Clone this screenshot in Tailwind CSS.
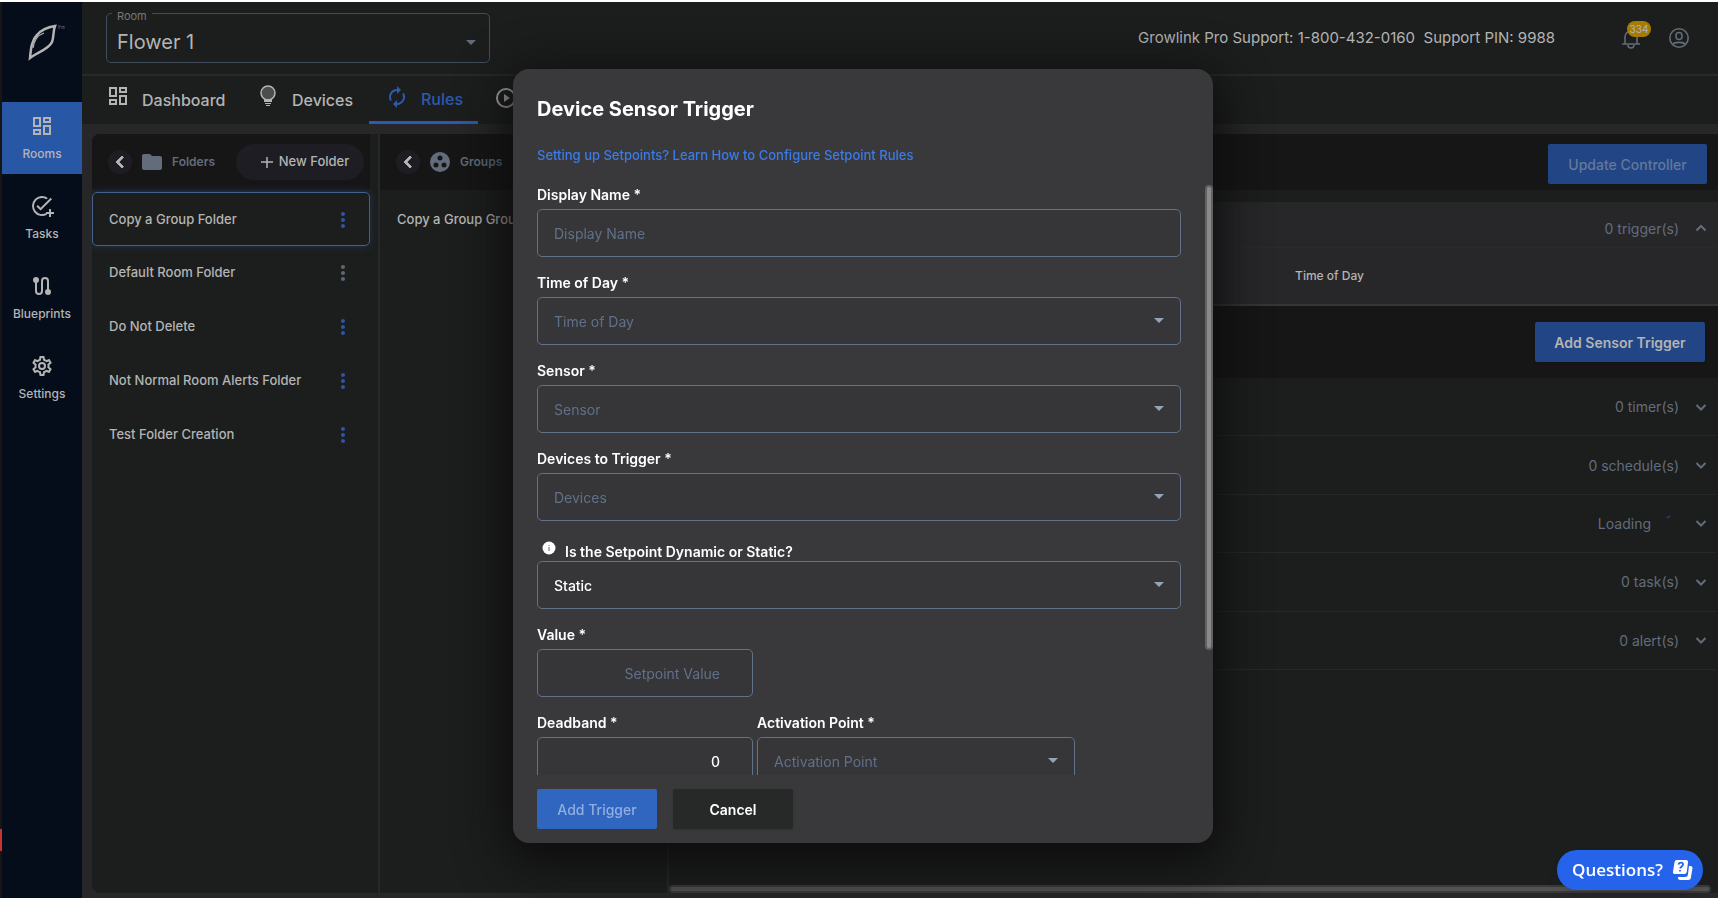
<!DOCTYPE html>
<html lang="en">
<head>
    <meta charset="UTF-8">
    <meta name="viewport" content="width=device-width, initial-scale=1.0">
    <title>Growlink - Rules</title>
    <script src="https://cdn.jsdelivr.net/npm/@tailwindcss/browser@4"></script>
</head>
<body class="h-screen overflow-hidden flex flex-col border-t-2 border-white bg-[#27272a] font-['Inter',sans-serif] text-[#b4b4b4]">
    <!-- Shared icons -->
    <svg class="hidden" xmlns="http://www.w3.org/2000/svg">
        <symbol id="i-dashboard" viewBox="0 0 24 24"><path d="M19 5v2h-4V5h4M9 5v6H5V5h4m10 8v6h-4v-6h4M9 17v2H5v-2h4M21 3h-8v6h8V3zM11 3H3v10h8V3zm10 8h-8v10h8V11zm-10 4H3v6h8v-6z"/></symbol>
        <symbol id="i-dots" viewBox="0 0 24 24"><path d="M12 8c1.100 0 2-.9 2-2s-.9-2-2-2-2 .9-2 2 .9 2 2 2zm0 2c-1.100 0-2 .9-2 2s.9 2 2 2 2-.9 2-2-.9-2-2-2zm0 6c-1.100 0-2 .9-2 2s.9 2 2 2 2-.9 2-2-.9-2-2-2z"/></symbol>
        <symbol id="i-left" viewBox="0 0 24 24"><path d="M15.400 7.400 14 6l-6 6 6 6 1.400-1.400L10.800 12z"/></symbol>
        <symbol id="i-down" viewBox="0 0 20 20"><path d="m5.500 8 4.500 4.500L14.500 8" fill="none" stroke="currentColor" stroke-width="2"/></symbol>
        <symbol id="i-up" viewBox="0 0 20 20"><path d="m5.500 11.500L10 7l4.500 4.500" fill="none" stroke="currentColor" stroke-width="2"/></symbol>
        <symbol id="i-caret" viewBox="0 0 10 5"><path d="M0 0h10L5 5z"/></symbol>
    </svg>

    <div class="flex-1 min-h-0 flex">
        <!-- Window edge -->
        <div class="w-[2px] bg-[#161616] flex flex-col justify-end pb-[47px]">
            <div class="h-[22px] bg-[#c83232]"></div>
        </div>

        <!-- Sidebar -->
        <nav class="w-20 flex-shrink-0 bg-[#060d1a] text-[12px] leading-4 font-medium flex flex-col gap-2">
            <a href="#" title="Growlink" class="h-[92px] pt-5 pl-[26px] text-[#b4b4b4]">
                <svg class="w-10 h-10" viewBox="0 0 40 40" fill="none" stroke="currentColor">
                    <path stroke-width="2.500" d="M2 36C3 25 4 18 9 13 14 7 20 5 27 4 25 9 26 15 24 20 21 27 10 30 2 36Z"/>
                    <path stroke-width="1.300" d="M5 26C6 19 10 13 16 11"/>
                    <path stroke-width="1" stroke="#4b5058" d="M30 4h3M31 4v3M34 7V4l1 1 1-1v3"/>
                </svg>
            </a>
            <a href="#" class="h-[72px] flex flex-col items-center gap-2 pt-3 bg-[#2857a6]">
                <svg class="w-6 h-6" fill="currentColor"><use href="#i-dashboard"/></svg>
                Rooms
            </a>
            <a href="#" class="h-[72px] flex flex-col items-center gap-2 pt-3">
                <svg class="w-6 h-6" viewBox="0 0 24 24" fill="currentColor"><path d="M22 5.200 10.600 16.600l-4.200-4.200 1.400-1.400 2.800 2.800L20.600 3.800 22 5.200zM12 20a8 8 0 1 1 4.400-14.700l1.500-1.400A10 10 0 1 0 17 20.700l-1-1.700c-1.200.6-2.600 1-4 1zm9-5h-2v3h-3v2h3v3h2v-3h3v-2h-3v-3z"/></svg>
                Tasks
            </a>
            <a href="#" class="h-[72px] flex flex-col items-center gap-2 pt-3">
                <svg class="w-6 h-6" viewBox="0 0 24 24" fill="none" stroke="currentColor" stroke-width="2"><path d="M6 7v10a3 3 0 0 0 6 0V7a3 3 0 0 1 6 0v10"/><circle cx="6" cy="6" r="2" fill="currentColor"/><circle cx="18" cy="18" r="2" fill="currentColor"/></svg>
                Blueprints
            </a>
            <a href="#" class="h-[72px] flex flex-col items-center gap-2 pt-3">
                <svg class="w-6 h-6" viewBox="0 0 24 24" fill="currentColor"><path d="M19.430 12.980c.04-.32.07-.64.07-.98s-.03-.66-.07-.98l2.110-1.650c.19-.15.24-.42.12-.64l-2-3.460c-.12-.22-.39-.3-.61-.22l-2.490 1c-.52-.4-1.080-.73-1.690-.98l-.38-2.650A.488.488 0 0 0 14 2h-4c-.25 0-.46.18-.49.420l-.38 2.650c-.61.25-1.170.59-1.690.98l-2.490-1c-.23-.09-.49 0-.61.22l-2 3.460c-.13.22-.07.49.12.64l2.110 1.650c-.04.32-.07.65-.07.98s.03.66.07.98l-2.110 1.650c-.19.15-.24.42-.12.64l2 3.460c.12.22.39.3.61.22l2.490-1c.52.4 1.080.73 1.690.98l.38 2.650c.03.24.24.42.49.42h4c.25 0 .46-.18.49-.42l.38-2.650c.61-.25 1.170-.59 1.690-.98l2.490 1c.23.09.49 0 .61-.22l2-3.460c.12-.22.07-.49-.12-.64l-2.110-1.650zm-1.980-1.710c.04.31.05.52.05.73s-.02.43-.05.73l-.14 1.130.89.7 1.080.84-.7 1.210-1.270-.51-1.040-.42-.9.680c-.43.32-.84.56-1.250.73l-1.060.43-.16 1.130-.2 1.350h-1.400l-.19-1.350-.16-1.130-1.060-.43c-.43-.18-.83-.41-1.230-.71l-.91-.7-1.060.43-1.270.51-.7-1.210 1.080-.84.89-.7-.14-1.130c-.03-.31-.05-.54-.05-.74s.02-.43.05-.73l.14-1.130-.89-.7-1.080-.84.7-1.210 1.270.51 1.040.42.9-.68c.43-.32.84-.56 1.250-.73l1.060-.43.16-1.130.2-1.350h1.390l.19 1.350.16 1.130 1.060.43c.43.18.83.41 1.230.71l.91.7 1.060-.43 1.270-.51.7 1.210-1.070.85-.89.7.14 1.130zM12 8a4 4 0 1 0 0 8 4 4 0 0 0 0-8zm0 6a2 2 0 1 1 0-4 2 2 0 0 1 0 4z"/></svg>
                Settings
            </a>
        </nav>

        <div class="flex-1 min-w-0 flex flex-col">
            <!-- Top bar -->
            <header class="h-[74px] flex-shrink-0 bg-[#1c1e1d] border-b-2 border-[#27292a] flex items-center justify-between pl-6 pr-[27px]">
                <div class="relative w-96 h-[50px] border border-[#414c5b] rounded-[5px] text-[#b4b4b4]">
                    <label for="room" class="absolute -top-2 left-[5px] px-[5px] bg-[#1c1e1d] text-[11px] leading-5 text-[#777]">Room</label>
                    <select id="room" class="appearance-none w-full h-full pt-2 pl-[10px] bg-transparent text-[20px]">
                        <option>Flower 1</option>
                    </select>
                    <svg class="absolute right-[13px] top-[26px] w-[10px] h-[5px] text-[#626c7b]" fill="currentColor"><use href="#i-caret"/></svg>
                </div>
                <div class="flex items-center">
                    <p class="text-[15px] whitespace-pre mr-16">Growlink Pro Support: 1-800-432-0160  Support PIN: 9988</p>
                    <button class="relative mr-6" title="Notifications">
                        <svg class="w-6 h-6 text-[#626c7b]" viewBox="0 0 24 24" fill="none" stroke="currentColor" stroke-width="1.600"><path d="M3 18h18M6 18v-7a6 6 0 0 1 12 0v7M9 19a3 3 0 0 0 6 0M12 5V3"/></svg>
                        <span class="absolute -top-[5px] left-2 h-4 w-6 rounded-full bg-[#a67c00] text-[10px] leading-4 text-center">334</span>
                    </button>
                    <button title="Account">
                        <svg class="w-6 h-6 text-[#626c7b]" viewBox="0 0 24 24" fill="none" stroke="currentColor" stroke-width="1.600"><circle cx="12" cy="12" r="9.200"/><rect x="9" y="6.500" width="6" height="7" rx="3"/><path d="M6 19c0-3.500 12-3.500 12 0"/></svg>
                    </button>
                </div>
            </header>

            <!-- Tabs -->
            <nav class="h-12 flex-shrink-0 bg-[#1c1e1d] pl-2 flex text-[16px] font-medium">
                <a href="#" class="w-[150px] pl-4 flex items-center gap-3">
                    <svg class="w-6 h-6 mb-2" fill="currentColor"><use href="#i-dashboard"/></svg>
                    Dashboard
                </a>
                <a href="#" class="w-[129px] pl-4 flex items-center gap-3">
                    <svg class="w-6 h-6 mb-2" viewBox="0 0 24 24" fill="currentColor"><circle cx="12" cy="9" r="7" fill="#4c4d4d" stroke="currentColor" stroke-width="1.500"/><path d="M8 15h8v3H8zM9 19h6v1H9zM10 21h4v1h-4z"/></svg>
                    Devices
                </a>
                <a href="#" class="w-[109px] pl-4 flex items-center gap-3 border-b-[3px] border-[#2b5bb0] text-[#2d59b0]">
                    <svg class="w-6 h-6 mb-1" viewBox="0 0 24 24" fill="currentColor"><path d="M12 6v3l4-4-4-4v3a8 8 0 0 0-6.760 12.260L6.700 14.800A6 6 0 0 1 12 6zm6.760 1.740L17.300 9.200A6 6 0 0 1 12 18v-3l-4 4 4 4v-3a8 8 0 0 0 6.760-12.260z"/></svg>
                    Rules
                </a>
                <a href="#" class="pl-4 flex items-center" title="Play">
                    <svg class="w-6 h-6 mb-1" viewBox="0 0 24 24" fill="none" stroke="currentColor" stroke-width="2"><circle cx="12" cy="12" r="9"/><path d="m10 8 6 4-6 4z" fill="currentColor" stroke="none"/></svg>
                </a>
            </nav>

            <!-- Rules board -->
            <main class="flex-1 min-h-0 mt-[10px] ml-[10px] mb-[5px] bg-[#1c1e1d] rounded-l-lg overflow-hidden flex text-[13px] font-medium">
                <section class="w-[288px] flex-shrink-0 pr-2 border-r-2 border-[#272828]">
                    <div class="h-14 bg-[#161616] flex items-center pl-4 pr-[6px] text-[#626c7b]">
                        <button class="w-6 h-6 rounded-full bg-[#1d1d23] text-[#b4b4b4]" title="Collapse folders"><svg class="w-6 h-6" fill="currentColor" stroke="currentColor"><use href="#i-left"/></svg></button>
                        <svg class="w-6 h-6 ml-2" viewBox="0 0 24 24" fill="currentColor"><path d="M10 4H4a2 2 0 0 0-2 2v12c0 1.100.9 2 2 2h16a2 2 0 0 0 2-2V8a2 2 0 0 0-2-2h-8z"/></svg>
                        <h2 class="ml-2 text-[12px] font-semibold">Folders</h2>
                        <button class="ml-auto h-9 w-32 pl-2 rounded-full bg-[#1d1d23] text-[#b4b4b4] flex items-center justify-center gap-1">
                            <svg class="w-4 h-4" viewBox="0 0 16 16" stroke="currentColor" stroke-width="1.500"><path d="M8 3v11M2 8h12"/></svg>
                            New Folder
                        </button>
                    </div>
                    <ul class="mt-[2px]">
                        <li class="h-[54px] pt-[2px] pl-4 pr-[14px] flex items-center justify-between border border-[#45628d] rounded-[5px] shadow-[0_0_8px_#1f3352]">Copy a Group Folder<button title="Options"><svg class="w-6 h-6 text-[#2f55a8]" fill="currentColor"><use href="#i-dots"/></svg></button></li>
                        <li class="h-[54px] pl-[17px] pr-[15px] flex items-center justify-between">Default Room Folder<button title="Options"><svg class="w-6 h-6 text-[#5d6874]" fill="currentColor"><use href="#i-dots"/></svg></button></li>
                        <li class="h-[54px] pl-[17px] pr-[15px] flex items-center justify-between">Do Not Delete<button title="Options"><svg class="w-6 h-6 text-[#2f55a8]" fill="currentColor"><use href="#i-dots"/></svg></button></li>
                        <li class="h-[54px] pl-[17px] pr-[15px] flex items-center justify-between">Not Normal Room Alerts Folder<button title="Options"><svg class="w-6 h-6 text-[#2f55a8]" fill="currentColor"><use href="#i-dots"/></svg></button></li>
                        <li class="h-[54px] pl-[17px] pr-[15px] flex items-center justify-between">Test Folder Creation<button title="Options"><svg class="w-6 h-6 text-[#2f55a8]" fill="currentColor"><use href="#i-dots"/></svg></button></li>
                    </ul>
                </section>

                <section class="w-[289px] flex-shrink-0 border-r-2 border-[#272828]">
                    <div class="h-14 bg-[#161616] flex items-center pl-4 text-[#626c7b]">
                        <button class="w-6 h-6 rounded-full bg-[#1d1d23] text-[#b4b4b4]" title="Collapse groups"><svg class="w-6 h-6" fill="currentColor" stroke="currentColor"><use href="#i-left"/></svg></button>
                        <svg class="w-6 h-6 ml-2" viewBox="0 0 24 24" fill="currentColor"><path fill-rule="evenodd" d="M12 2a10 10 0 1 0 0 20 10 10 0 0 0 0-20zM8 17.500a2.500 2.500 0 1 1 0-5 2.500 2.500 0 0 1 0 5zM9.500 8a2.500 2.500 0 1 1 5 0 2.500 2.500 0 0 1-5 0zm6.500 9.500a2.500 2.500 0 1 1 0-5 2.500 2.500 0 0 1 0 5z"/></svg>
                        <h2 class="ml-2 text-[12px] font-semibold">Groups</h2>
                    </div>
                    <p class="h-[60px] pl-[17px] flex items-center">Copy a Group Group</p>
                </section>

                <!-- Group details -->
                <section class="flex-1 min-w-0 flex flex-col text-[14px]">
                    <div class="h-14 flex-shrink-0 bg-[#161616] flex items-end justify-end pr-[11px] pb-[6px]">
                        <button class="h-10 w-[159px] rounded-[2px] bg-[#224585] text-[#63799c]" disabled>Update Controller</button>
                    </div>
                    <div class="mt-3 flex-shrink-0 h-[104px] bg-[#27272a] border-b-2 border-[#353637]">
                        <div class="h-[46px] border-b border-[#2a2a2d] pt-2 pr-[7px] flex items-center justify-end gap-3 text-[#626c7b] font-normal">0 trigger(s) <svg class="w-5 h-5"><use href="#i-up"/></svg></div>
                        <div class="h-14 flex items-center justify-end pr-[354px] text-[12px]">Time of Day</div>
                    </div>
                    <div class="h-[72px] flex-shrink-0 bg-[#161616] flex items-center justify-end pr-[13px]">
                        <button class="h-10 w-[170px] rounded-[2px] bg-[#224585] font-semibold shadow">Add Sensor Trigger</button>
                    </div>
                    <ul class="h-[292px] flex-shrink-0 grid grid-rows-5 text-[#626c7b] font-normal mr-[2px]">
                        <li class="border-b border-[#272828] flex items-center justify-end gap-3 pr-[5px]">0 timer(s) <svg class="w-5 h-5"><use href="#i-down"/></svg></li>
                        <li class="border-b border-[#272828] flex items-center justify-end gap-3 pr-[5px]">0 schedule(s) <svg class="w-5 h-5"><use href="#i-down"/></svg></li>
                        <li class="border-b border-[#272828] flex items-center justify-end gap-3 pr-[5px]">Loading <svg class="w-4 h-4" viewBox="0 0 16 16" fill="none" stroke="#352c80" stroke-width="2"><path d="m4 3 3-2"/></svg><svg class="w-5 h-5"><use href="#i-down"/></svg></li>
                        <li class="border-b border-[#272828] flex items-center justify-end gap-3 pr-[5px]">0 task(s) <svg class="w-5 h-5"><use href="#i-down"/></svg></li>
                        <li class="border-b border-[#272828] flex items-center justify-end gap-3 pr-[5px]">0 alert(s) <svg class="w-5 h-5"><use href="#i-down"/></svg></li>
                    </ul>
                    <div class="mt-auto mr-[7px] h-2 rounded-full bg-[#525252] border-2 border-[#3a3a3a]"></div>
                </section>
            </main>
        </div>
    </div>

    <!-- Device Sensor Trigger dialog -->
    <div class="fixed inset-0 flex items-center justify-center pt-[14px] pl-2">
        <div role="dialog" aria-labelledby="dialog-title" class="relative w-[700px] h-[774px] rounded-2xl bg-[#39393b] text-white text-[14px] font-medium flex flex-col overflow-hidden shadow-[0_12px_48px_8px_#0c0c0c]">
            <h1 id="dialog-title" class="pt-6 px-6 text-[20px] leading-8 font-bold">Device Sensor Trigger</h1>
            <a href="#" class="mt-5 px-6 text-[13px] leading-5 text-[#3b7be9]">Setting up Setpoints? Learn How to Configure Setpoint Rules</a>
            <form class="mt-5 flex-1 min-h-0 overflow-hidden pl-6 pr-8 flex flex-col gap-4">
                <div>
                    <label for="name" class="block h-6 leading-5 font-semibold">Display Name *</label>
                    <input id="name" type="text" placeholder="Display Name" class="w-full h-12 px-4 border border-[#617289] rounded-[5px] bg-[#363638] font-normal placeholder:text-[#617089]">
                </div>
                <div class="relative">
                    <label for="time" class="block h-6 leading-5 font-semibold">Time of Day *</label>
                    <select id="time" class="appearance-none w-full h-12 px-4 border border-[#617289] rounded-[5px] bg-[#363638] font-normal text-[#617089]"><option>Time of Day</option></select>
                    <svg class="absolute right-[17px] bottom-[22px] w-[10px] h-[5px] text-[#94a3b8]" fill="currentColor"><use href="#i-caret"/></svg>
                </div>
                <div class="relative">
                    <label for="sensor" class="block h-6 leading-5 font-semibold">Sensor *</label>
                    <select id="sensor" class="appearance-none w-full h-12 px-4 border border-[#617289] rounded-[5px] bg-[#363638] font-normal text-[#617089]"><option>Sensor</option></select>
                    <svg class="absolute right-[17px] bottom-[22px] w-[10px] h-[5px] text-[#94a3b8]" fill="currentColor"><use href="#i-caret"/></svg>
                </div>
                <div class="relative">
                    <label for="devices" class="block h-6 leading-5 font-semibold">Devices to Trigger *</label>
                    <select id="devices" class="appearance-none w-full h-12 px-4 border border-[#617289] rounded-[5px] bg-[#363638] font-normal text-[#617089]"><option>Devices</option></select>
                    <svg class="absolute right-[17px] bottom-[22px] w-[10px] h-[5px] text-[#94a3b8]" fill="currentColor"><use href="#i-caret"/></svg>
                </div>
                <div class="relative">
                    <label for="setpoint" class="h-6 pt-1 pl-[5px] flex gap-[9px] font-semibold"><svg class="w-[14px] h-[14px]" viewBox="0 0 14 14"><circle cx="7" cy="7" r="6.500" fill="#fff"/><path d="M7 6v4M7 4v1" stroke="#666"/></svg>Is the Setpoint Dynamic or Static?</label>
                    <select id="setpoint" class="appearance-none w-full h-12 px-4 border border-[#617289] rounded-[5px] bg-[#363638]"><option>Static</option><option>Dynamic</option></select>
                    <svg class="absolute right-[17px] bottom-[22px] w-[10px] h-[5px] text-[#94a3b8]" fill="currentColor"><use href="#i-caret"/></svg>
                </div>
                <div class="w-[216px]">
                    <label for="value" class="block h-6 leading-5 font-semibold">Value *</label>
                    <input id="value" type="text" placeholder="Setpoint Value" class="w-full h-12 px-8 border border-[#617289] rounded-[5px] bg-[#363638] font-normal text-right placeholder:text-[#617089]">
                </div>
                <div class="flex gap-1">
                    <div class="w-[216px]">
                        <label for="deadband" class="block h-6 leading-5 font-semibold">Deadband *</label>
                        <input id="deadband" type="text" value="0" class="w-full h-12 px-8 border border-[#617289] rounded-[5px] bg-[#363638] text-right">
                    </div>
                    <div class="relative w-[318px]">
                        <label for="activation" class="block h-6 leading-5 font-semibold">Activation Point *</label>
                        <select id="activation" class="appearance-none w-full h-12 px-4 border border-[#617289] rounded-[5px] bg-[#363638] font-normal text-[#617089]"><option>Activation Point</option></select>
                        <svg class="absolute right-[17px] bottom-[22px] w-[10px] h-[5px] text-[#94a3b8]" fill="currentColor"><use href="#i-caret"/></svg>
                    </div>
                </div>
            </form>
            <div class="px-6 py-[14px] flex gap-4">
                <button class="w-[120px] h-10 rounded-[2px] bg-[#3066c0] text-[#91aee0]" disabled>Add Trigger</button>
                <button class="w-[120px] h-10 rounded-[2px] bg-[#272928] font-semibold shadow">Cancel</button>
            </div>
            <!-- Scroll thumb -->
            <div class="absolute right-0 top-[116px] w-2 h-[465px] rounded-full bg-[#8a8a8a] border-2 border-[#626263]"></div>
        </div>
    </div>

    <!-- Help launcher -->
    <button class="fixed right-[15px] bottom-2 h-10 w-[146px] pl-[5px] rounded-full bg-[#2563eb] text-white font-['Open_Sans',sans-serif] text-[17px] font-semibold flex items-center justify-center gap-[10px] shadow-lg">
        Questions?
        <svg class="w-5 h-5" viewBox="0 0 20 20"><path d="M16 6h1.500A2 2 0 0 1 19.500 8L18 17a3 3 0 0 1-3 3H7a2 2 0 0 1-2-2v-1h7a3 3 0 0 0 3-3z" fill="#fff"/><path d="M4 0h9a2 2 0 0 1 2 2.300l-1.200 9.500A2.500 2.500 0 0 1 11.300 14H2a2 2 0 0 1-2-2.300L1.500 2.200A2.500 2.500 0 0 1 4 0z" fill="#fff"/><path d="M5.500 4.500c.5-2.500 5-2.500 4.500.2C9.700 6.500 7.500 6.500 7.200 8.500M7 10v1.500" fill="none" stroke="#2563eb" stroke-width="1.800"/></svg>
    </button>
</body>
</html>
